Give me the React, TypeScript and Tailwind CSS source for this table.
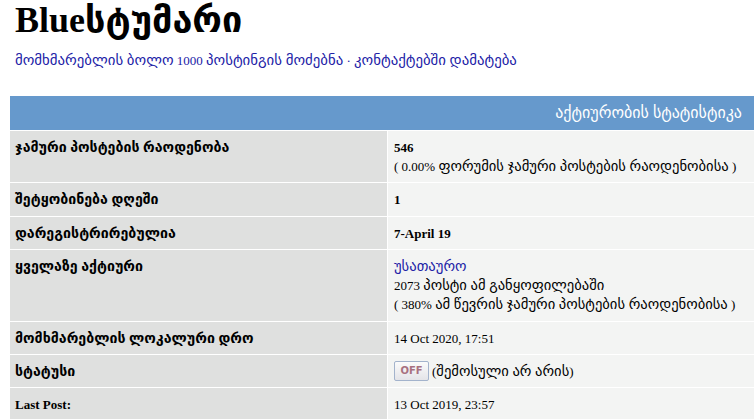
import React from 'react';

const Ka: React.FC<{ text: string; size?: string }> = ({ text, size = 'text-[14.6px]' }) => {
    const parts = text.split(/([\u10A0-\u10FF]+(?:\s+[\u10A0-\u10FF]+)*)/);
    return (
        <>
            {parts.map((p, i) =>
                /[\u10A0-\u10FF]/.test(p) ? (
                    <span key={i} className={`${size} leading-[14px]`}>{p}</span>
                ) : (
                    <React.Fragment key={i}>{p}</React.Fragment>
                )
            )}
        </>
    );
};

type Row = {
    label: string;
    content: React.ReactNode;
};

const OffButton: React.FC = () => (
    <span className="inline-flex items-center justify-center w-[35px] h-[20px] shrink-0 rounded-[2px] border border-[#a3b3cc] bg-gradient-to-b from-[#fbfbfb] to-[#e4e4e8] text-[10px] font-bold text-[#a87080] font-['DejaVu_Sans',sans-serif] leading-none">
        OFF
    </span>
);

const rows: Row[] = [
    {
        label: 'ჯამური პოსტების რაოდენობა',
        content: (
            <>
                <div className="font-bold">546</div>
                <div><Ka text="( 0.00% ფორუმის ჯამური პოსტების რაოდენობისა )" /></div>
            </>
        ),
    },
    { label: 'შეტყობინება დღეში', content: <div className="font-bold">1</div> },
    { label: 'დარეგისტრირებულია', content: <div className="font-bold">7-April 19</div> },
    {
        label: 'ყველაზე აქტიური',
        content: (
            <>
                <div className="text-[#2121a6]"><Ka text="უსათაურო" /></div>
                <div><Ka text="2073 პოსტი ამ განყოფილებაში" /></div>
                <div><Ka text="( 380% ამ წევრის ჯამური პოსტების რაოდენობისა )" /></div>
            </>
        ),
    },
    { label: 'მომხმარებლის ლოკალური დრო', content: <div>14 Oct 2020, 17:51</div> },
    {
        label: 'სტატუსი',
        content: (
            <div className="flex items-center gap-[3px] h-[19px]">
                <OffButton />
                <span><Ka text="(შემოსული არ არის)" /></span>
            </div>
        ),
    },
    { label: 'Last Post:', content: <div>13 Oct 2019, 23:57</div> },
];

const App: React.FC = () => {
    return (
        <div className="min-h-screen bg-white text-black font-['Liberation_Serif','DejaVu_Sans',serif] text-[13px] overflow-hidden">
            <div className="pl-[15px]">
                <h1 className="h-[40px] text-[36px] leading-[40px] font-bold">Blueსტუმარი</h1>
                <p className="mt-[11px] leading-[19px] text-[#2121a6]">
                    <Ka text="მომხმარებლის ბოლო 1000 პოსტინგის მოძებნა · კონტაქტებში დამატება" size="text-[14.8px]" />
                </p>
            </div>

            <div className="mt-[26px] ml-[10px] grid grid-cols-[377px_1fr] gap-[1px] bg-white">
                <div className="col-span-2 h-[34px] bg-[#6699cc] flex items-center justify-end pr-[12px] text-white text-[16px]">
                    აქტიურობის სტატისტიკა
                </div>
                {rows.map(row => (
                    <React.Fragment key={row.label}>
                        <div className="bg-[#dfe0df] px-[5px] pt-[7px] pb-[6.4px] leading-[19px] font-bold">
                            <Ka text={row.label} size="text-[14.2px]" />
                        </div>
                        <div className="bg-[#f3f4f3] px-[6px] pt-[7px] pb-[6.4px] leading-[19px]">{row.content}</div>
                    </React.Fragment>
                ))}
            </div>
        </div>
    );
};

export default App;
